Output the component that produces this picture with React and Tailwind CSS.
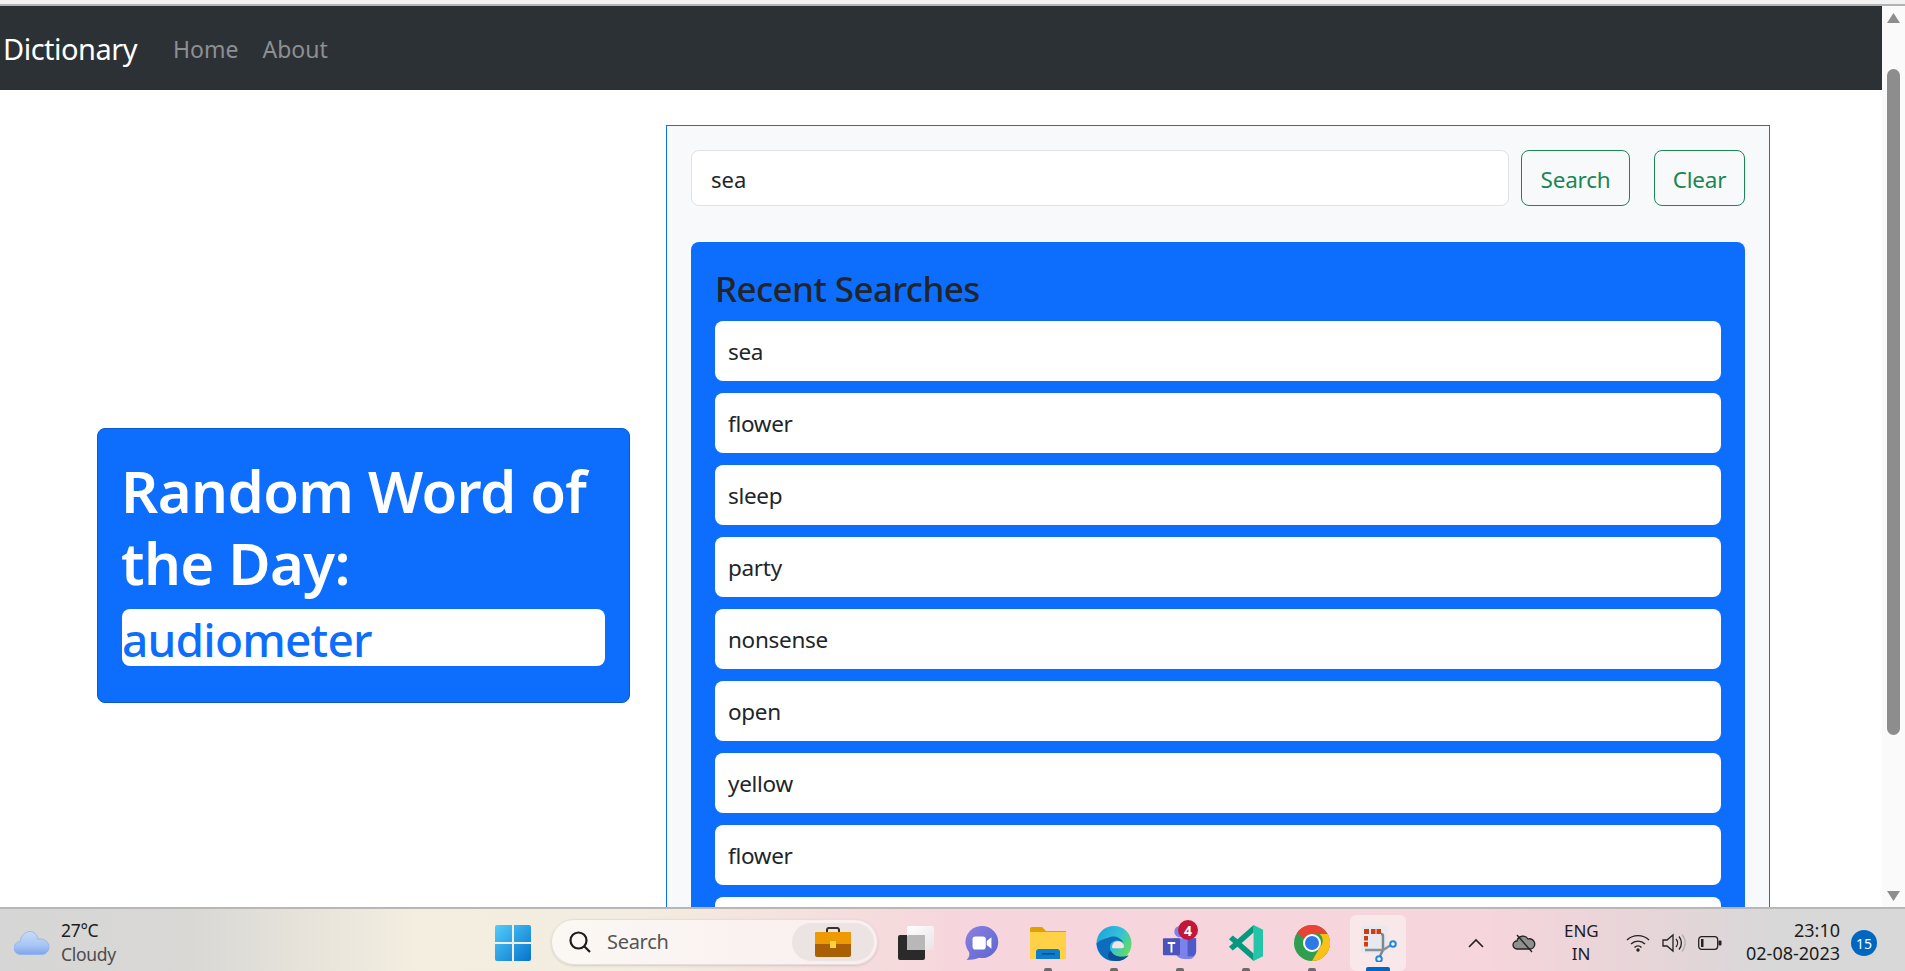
// App.jsx
import React from "react";

const recent = ["sea", "flower", "sleep", "party", "nonsense", "open", "yellow", "flower", ""];

function Cloud() {
  return (
    <svg width="36" height="24" viewBox="0 0 36 24">
      <defs>
        <linearGradient id="cl" x1="0" y1="0" x2="0" y2="1">
          <stop offset="0" stopColor="#c9dcf8" />
          <stop offset="0.6" stopColor="#a8c5f4" />
          <stop offset="1" stopColor="#7ea6ec" />
        </linearGradient>
      </defs>
      <path d="M7 23.500a6.500 6.500 0 0 1-1-13C7 4 12 0.500 16 0.500c4 0 7 3 8 7.500 6-1 11 3 11 8 0 4-3 7.500-7 7.500z" fill="url(#cl)" stroke="#8eb0ee" strokeWidth="0.800" />
    </svg>
  );
}

function WinLogo() {
  return (
    <svg width="36" height="36" viewBox="0 0 36 36">
      <defs>
        <linearGradient id="wn" x1="0" y1="0" x2="1" y2="1">
          <stop offset="0" stopColor="#52cdf9" />
          <stop offset="1" stopColor="#0573cf" />
        </linearGradient>
      </defs>
      <path d="M2 0h15v17H0V2a2 2 0 0 1 2-2zM19 0h15a2 2 0 0 1 2 2v15H19zM0 19h17v17H2a2 2 0 0 1-2-2zM19 19h17v15a2 2 0 0 1-2 2H19z" fill="url(#wn)" />
    </svg>
  );
}

function Briefcase() {
  return (
    <svg width="36" height="30" viewBox="0 0 36 30">
      <path d="M12 6V2.500A2 2 0 0 1 14 1h8a2 2 0 0 1 2 1.500V6" fill="none" stroke="#333" strokeWidth="2" />
      <rect x="0" y="5" width="36" height="25" rx="2" fill="#a95f04" />
      <path d="M0 7a2 2 0 0 1 2-2h32a2 2 0 0 1 2 2v10H0z" fill="#ee9a05" />
      <rect x="15" y="14" width="6" height="7" fill="#fad33e" />
    </svg>
  );
}

function TaskView() {
  return (
    <svg width="36" height="34" viewBox="0 0 36 34">
      <defs>
        <linearGradient id="tv" x1="0" y1="0" x2="1" y2="1">
          <stop offset="0" stopColor="#ffffff" />
          <stop offset="1" stopColor="#e8e4e6" />
        </linearGradient>
      </defs>
      <rect x="0" y="9" width="27" height="25" rx="2" fill="#2a2a2a" />
      <rect x="9" y="0" width="27" height="24" rx="2" fill="url(#tv)" />
      <path d="M11 9h16v15H9V11a2 2 0 0 1 2-2z" fill="#b8b8b8" />
    </svg>
  );
}

function Meet() {
  return (
    <svg width="34" height="34" viewBox="0 0 34 36">
      <defs>
        <linearGradient id="mt" x1="0" y1="0" x2="1" y2="1">
          <stop offset="0" stopColor="#8d7fe0" />
          <stop offset="1" stopColor="#5867cf" />
        </linearGradient>
      </defs>
      <path d="M17 0a17 17 0 1 1-3 33.700C10 35.500 5 36 0.500 36 3 34 4 31.500 3.500 28A17 17 0 0 1 17 0z" fill="url(#mt)" />
      <rect x="7" y="11" width="14" height="14" rx="3" fill="#fff" />
      <path d="M22 16l5-4v12l-5-4z" fill="#fff" />
    </svg>
  );
}

function Folder() {
  return (
    <svg width="36" height="32" viewBox="0 0 36 32">
      <path d="M0 2a2 2 0 0 1 2-2h10l4 4h20v6H0z" fill="#e0a100" />
      <rect x="0" y="5" width="36" height="27" fill="#ffd146" />
      <path d="M6 32v-7a3 3 0 0 1 3-3h18a3 3 0 0 1 3 3v7z" fill="#0a7fd2" />
      <rect x="12" y="26" width="13" height="1.500" fill="#07467f" />
    </svg>
  );
}

function Edge() {
  return (
    <svg width="36" height="37" viewBox="0 0 36 38">
      <defs>
        <linearGradient id="eg" x1="0" y1="0" x2="1" y2="0.600">
          <stop offset="0" stopColor="#1a9fd8" />
          <stop offset="0.600" stopColor="#35c1d8" />
          <stop offset="1" stopColor="#62dc62" />
        </linearGradient>
      </defs>
      <circle cx="18" cy="19" r="18" fill="url(#eg)" />
      <path d="M0 19C1 31 11 38 20 37c5 0 10-2 13-6-6 3-15 2-18-4-3-5 0-11 6-11 5 0 7 3 7 3-2-6-10-9-16-6C6 15 2 16 0 19z" fill="#0f6cbd" />
      <path d="M15 27c3 6 12 7 18 4-3 4-8 6-13 6-3 0-5-1-7-2-2-3-1-8 2-8z" fill="#0b4f94" />
      <path d="M16 23c0-5 4-7 8-6 3 1 5 4 4 6-1 1-5 1-7 1s-5 0-5-1z" fill="#f6e3e8" />
    </svg>
  );
}

function Teams() {
  return (
    <div className="relative w-[44px] h-[40px] pt-[2px]">
      <svg width="36" height="36" viewBox="0 0 36 38">
        <circle cx="18" cy="7" r="6" fill="#7b83eb" />
        <path d="M11 14h24v14a8 8 0 0 1-8 8h-4a12 12 0 0 1-12-12z" fill="#7b83eb" />
        <path d="M26 14h9v14a5 5 0 0 1-5 5h-4z" fill="#5059c9" />
        <rect x="0" y="14" width="18" height="18" rx="1" fill="#4b53bc" />
        <path d="M5 18h8v2h-3v9H8v-9H5z" fill="#fff" />
      </svg>
      <span className="absolute right-0 top-[-3px] w-[20px] h-[20px] rounded-full bg-[#c4153a] text-white text-[14px] font-bold flex items-center justify-center">
        4
      </span>
    </div>
  );
}

function VsCode() {
  return (
    <svg width="36" height="36" viewBox="0 0 36 38">
      <path d="M26 0l10 5v28l-10 5z" fill="#24c4a8" />
      <path d="M26 0v8L9 23l-5 4-4-4 9-8z" fill="#049a80" />
      <path d="M26 38v-8L9 15 4 11l-4 4 9 8z" fill="#049a80" />
    </svg>
  );
}

function Chrome() {
  return (
    <svg width="36" height="36" viewBox="0 0 36 36">
      <circle cx="18" cy="18" r="18" fill="#2f9e4f" />
      <path d="M18 0a18 18 0 0 1 15.600 9H18a9 9 0 0 0-8 5L3 8A18 18 0 0 1 18 0z" fill="#e94335" />
      <path d="M33.600 9A18 18 0 0 1 18 36l7.800-13.500a9 9 0 0 0 0-13.500z" fill="#fbc116" />
      <circle cx="18" cy="18" r="9" fill="#fff" />
      <circle cx="18" cy="18" r="7" fill="#2f78e8" />
    </svg>
  );
}

function Snip() {
  return (
    <svg width="36" height="36" viewBox="0 0 36 36">
      <rect x="0" y="0" width="27" height="27" rx="3" fill="#e6eaee" />
      <path d="M3 3h5v5H3zM10 3h4.500v5H10zM15.500 3H20v5h-4.500zM3 10h4v4.500H3zM3 16h4v4.500H3z" fill="#d13b10" />
      <path d="M20 8a2 2 0 0 1 2 2v14l-3 6" fill="none" stroke="#7f868e" strokeWidth="2.500" />
      <path d="M4 24h18l8-5" fill="none" stroke="#8a9098" strokeWidth="2.500" />
      <circle cx="32" cy="18" r="2.800" fill="#fff" stroke="#1e88e0" strokeWidth="2" />
      <circle cx="18" cy="33" r="2.800" fill="#fff" stroke="#1e88e0" strokeWidth="2" />
    </svg>
  );
}

function Dot() {
  return <span className="absolute bottom-0 left-1/2 -translate-x-1/2 w-[8px] h-[3px] rounded-t-[2px] bg-[#6b6b6b]" />;
}

function Slot({ children, dot }) {
  return (
    <div className="relative w-[36px] h-[56px] flex items-center justify-center shrink-0">
      {children}
      {dot && <Dot />}
    </div>
  );
}

function TrayIcons() {
  return (
    <>
      <svg className="ml-[62px]" width="16" height="10" viewBox="0 0 16 10">
        <path d="M1 9l7-7 7 7" fill="none" stroke="#222" strokeWidth="1.600" />
      </svg>
      <svg className="ml-[28px]" width="24" height="20" viewBox="0 0 24 20">
        <path d="M5 16a4 4 0 0 1 0-8 6 6 0 0 1 11-2 5 5 0 0 1 3 10z" fill="#8f8f8f" stroke="#222" strokeWidth="1.300" />
        <path d="M5 2l15 17" stroke="#222" strokeWidth="1.300" />
      </svg>
      <div className="ml-[28px] -mt-[3px] w-[34px] text-center text-[#1c1c1c] text-[17px] leading-[23px] shrink-0">
        <div>ENG</div>
        <div>IN</div>
      </div>
      <svg className="ml-[28px]" width="24" height="18" viewBox="0 0 24 18">
        <path d="M1 6a16 16 0 0 1 22 0M5 10a10 10 0 0 1 14 0M8.500 13.500a5 5 0 0 1 7 0" fill="none" stroke="#222" strokeWidth="1.400" />
        <circle cx="12" cy="16" r="1.700" fill="#222" />
      </svg>
      <svg className="ml-[12px]" width="24" height="20" viewBox="0 0 24 20">
        <path d="M1 7h4l6-5v16l-6-5H1z" fill="none" stroke="#222" strokeWidth="1.300" />
        <path d="M14 6a6 6 0 0 1 0 8M17 3.500a10 10 0 0 1 0 13" fill="none" stroke="#222" strokeWidth="1.300" />
        <path d="M20 1.500a13 13 0 0 1 0 17" fill="none" stroke="#b9b0b4" strokeWidth="1.300" />
      </svg>
      <svg className="ml-[12px]" width="24" height="14" viewBox="0 0 24 14">
        <rect x="0.700" y="0.700" width="19" height="12.600" rx="3" fill="none" stroke="#222" strokeWidth="1.300" />
        <rect x="3" y="3" width="2.500" height="8" fill="#222" />
        <rect x="20.500" y="4.500" width="3" height="5" rx="1" fill="#222" />
      </svg>
    </>
  );
}

export default function App() {
  return (
    <div className="h-screen flex flex-col overflow-hidden bg-white font-['Noto_Sans',sans-serif]">
      <div className="h-[6px] shrink-0 bg-[#f2f2f2] border-b-2 border-[#b3b3b3]" />

      <div className="flex-1 min-h-0 flex">
        <div className="flex-1 min-w-0 overflow-hidden">
          {/* Navbar */}
          <nav className="h-[84px] bg-[#2c3135] flex items-center pl-[3px] pt-[2px]">
            <span className="text-white text-[29px] tracking-[-0.5px]">Dictionary</span>
            <span className="ml-[36px] text-[#8d8f91] text-[23px]">Home</span>
            <span className="ml-[24px] text-[#8d8f91] text-[23px]">About</span>
          </nav>

          <div className="flex pl-[97px] py-[35px] gap-[36px]">
            {/* Word of the day */}
            <div className="w-[533px] h-[275px] self-center shrink-0 bg-[#0d6efd] rounded-[8px] border border-[#0a58ca] p-[24px]">
              <h1 className="-ml-[1px] pt-[2px] mb-[10px] text-white text-[58px] leading-[72px] font-semibold tracking-[-0.6px]">
                Random Word of the Day:
              </h1>
              <div className="h-[57px] w-[483px] bg-white rounded-[8px] text-[#0d6efd] text-[46px] leading-[60px] font-medium tracking-[-0.8px]">
                audiometer
              </div>
            </div>

            {/* Search panel */}
            <div className="w-[1104px] shrink-0 bg-[#f8f9fa] border border-[#0d6efd] p-[24px]">
              <div className="flex">
                <div className="flex-1 h-[56px] bg-white border border-[#dee2e6] rounded-[8px] pl-[19px] pt-[3px] flex items-center text-[#212529] text-[22px]">
                  sea
                </div>
                <button className="ml-[12px] w-[109px] h-[56px] pt-[3px] border border-[#198754] rounded-[8px] text-[#198754] text-[22.500px] tracking-[-0.2px]">
                  Search
                </button>
                <button className="ml-[24px] w-[91px] h-[56px] pt-[3px] border border-[#198754] rounded-[8px] text-[#198754] text-[22.500px] tracking-[-0.2px]">
                  Clear
                </button>
              </div>

              <div className="mt-[36px] bg-[#0d6efd] rounded-[8px] p-[24px]">
                <h2 className="h-[55px] text-[#212529] text-[35px] leading-[46px] font-medium tracking-[-0.6px]">
                  Recent Searches
                </h2>
                <ul className="flex flex-col gap-[12px]">
                  {recent.map((word, i) => (
                    <li key={i} className="h-[60px] bg-white rounded-[8px] pl-[13px] pt-[1px] flex items-center text-[#212529] text-[22.500px] tracking-[-0.3px]">
                      {word}
                    </li>
                  ))}
                </ul>
              </div>
            </div>
          </div>
        </div>

        {/* Scrollbar */}
        <div className="w-[23px] shrink-0 bg-[#fafafa] flex flex-col items-center">
          <svg className="mt-[7px] shrink-0" width="13" height="10" viewBox="0 0 13 10">
            <path d="M6.500 0L13 10H0z" fill="#8d8d8d" />
          </svg>
          <div className="mt-[46px] w-[13px] h-[666px] rounded-full bg-[#8d8d8d]" />
          <svg className="mt-auto mb-[6px] shrink-0" width="13" height="10" viewBox="0 0 13 10">
            <path d="M0 0h13L6.500 10z" fill="#8d8d8d" />
          </svg>
        </div>
      </div>

      {/* Taskbar */}
      <div className="h-[64px] shrink-0 pt-[6px] border-t-2 border-[#b9b7b5] flex items-center bg-[linear-gradient(90deg,#d6d6d6_0%,#d9d8d5_10%,#f4eee0_22%,#f3ece0_34%,#f6d6dc_50%,#f6d5dc_78%,#e4d5d8_88%,#d8d8d8_93%,#d8d8d8_100%)]">
        <div className="w-[495px] shrink-0 pl-[14px] flex items-center gap-[11px]">
          <Cloud />
          <div className="-mt-[3px] text-[17.500px] leading-[24px] tracking-[-0.3px]">
            <div className="text-[#1c1c1c]">27°C</div>
            <div className="text-[#4c4c4c]">Cloudy</div>
          </div>
        </div>
        <WinLogo />
        <div className="ml-[20px] -mt-[3px] w-[327px] h-[46px] shrink-0 rounded-full bg-[linear-gradient(90deg,#fbf8f3,#faeef0)] border border-[#e3dedb] shadow-sm flex items-center pl-[16px] pr-[3px]">
          <svg width="24" height="24" viewBox="0 0 24 24" fill="none" stroke="#1c1c1c" strokeWidth="2.200">
            <circle cx="10.500" cy="10.500" r="8" />
            <path d="M16.500 16.500L22 22" />
          </svg>
          <span className="ml-[15px] text-[#555] text-[20px] tracking-[-0.3px]">Search</span>
          <div className="ml-auto w-[82px] h-[38px] rounded-full bg-[#ece4e2] flex items-center justify-center">
            <Briefcase />
          </div>
        </div>
        <div className="ml-[20px] flex items-center gap-[30px]">
          <Slot><TaskView /></Slot>
          <Slot><Meet /></Slot>
          <Slot dot><Folder /></Slot>
          <Slot dot><Edge /></Slot>
          <Slot dot><Teams /></Slot>
          <Slot dot><VsCode /></Slot>
          <Slot dot><Chrome /></Slot>
        </div>
        <div className="relative ml-[20px] w-[56px] h-[56px] shrink-0 rounded-[6px] bg-[#f9e8ea] flex items-center justify-center">
          <div className="pl-[1px] pt-[1px] flex"><Snip /></div>
          <span className="absolute bottom-0 left-[16px] w-[24px] h-[4px] rounded-t-[2px] bg-[#0067c0]" />
        </div>
        <TrayIcons />
        <div className="ml-auto -mt-[3px] text-right text-[#1c1c1c] text-[18px] leading-[23px]">
          <div>23:10</div>
          <div>02-08-2023</div>
        </div>
        <div className="ml-[11px] mr-[28px] w-[26px] h-[26px] rounded-full bg-[#0067c0] text-white text-[14px] flex items-center justify-center">
          15
        </div>
      </div>
    </div>
  );
}
